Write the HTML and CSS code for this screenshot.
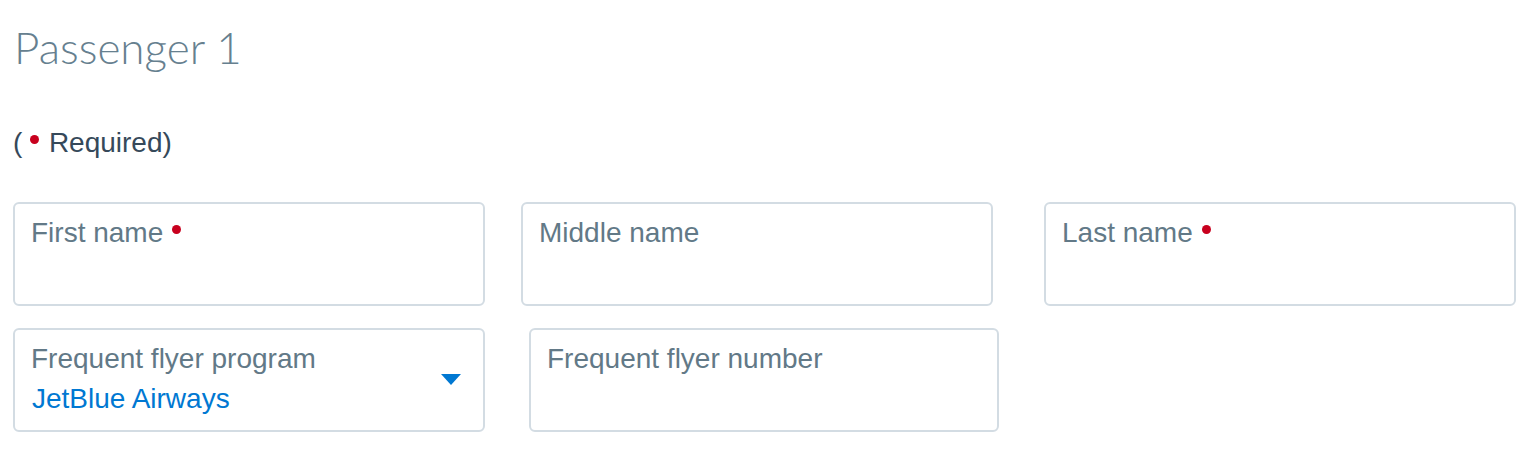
FILE: index.html
```html
<!DOCTYPE html>
<html lang="en">
<head>
    <meta charset="UTF-8">
    <meta name="viewport" content="width=device-width, initial-scale=1.0">
    <title>Passenger 1</title>
    <link rel="stylesheet" href="styles.css">
</head>
<body>
    <div class="passenger">
        <h1>Passenger 1</h1>
        <p class="required-note">( <span class="req-dot"></span> Required)</p>

        <div class="field-row">
            <div class="field">
                <div class="field-text">
                    <span class="label">First name <span class="req-dot"></span></span>
                </div>
            </div>
            <div class="field">
                <div class="field-text">
                    <span class="label">Middle name</span>
                </div>
            </div>
            <div class="field field-last">
                <div class="field-text">
                    <span class="label">Last name <span class="req-dot"></span></span>
                </div>
            </div>
        </div>

        <div class="field-row second">
            <div class="field field-select">
                <div class="field-text">
                    <span class="label">Frequent flyer program</span>
                    <span class="value">JetBlue Airways</span>
                </div>
                <span class="arrow"></span>
            </div>
            <div class="field field-number">
                <div class="field-text">
                    <span class="label">Frequent flyer number</span>
                </div>
            </div>
        </div>
    </div>
</body>
</html>
```

FILE: styles.css
```css
body {
    margin: 0;
    padding: 21px 13px 0 13px;
    background-color: #ffffff;
    font-family: "Liberation Sans", Arial, sans-serif;
}
h1 {
    margin: 0 0 0 1px;
    font-family: Lato, "Open Sans", sans-serif;
    font-weight: 300;
    font-size: 44px;
    line-height: 1.2;
    color: #66808f;
}
.required-note {
    margin: 53px 0 0 0;
    font-size: 28px;
    line-height: 32px;
    color: #36495a;
}
.req-dot {
    display: inline-block;
    width: 9px;
    height: 9px;
    border-radius: 50%;
    background-color: #c8001e;
    vertical-align: 8px;
    margin-right: 2px;
}
.field-row {
    display: flex;
    gap: 36px;
    margin-top: 43px;
}
.field-row.second {
    gap: 44px;
    margin-top: 22px;
}
.field {
    box-sizing: border-box;
    width: 472px;
    height: 104px;
    border: 2px solid #d3dce3;
    border-radius: 6px;
    padding: 13px 16px 0 16px;
    display: flex;
}
.field-last {
    margin-left: 15px;
}
.field-number {
    width: 470px;
}
.field-text {
    display: flex;
    flex-direction: column;
    flex: 1;
}
.label {
    font-size: 28px;
    line-height: 32px;
    color: #627987;
}
.label .req-dot {
    margin-left: 1px;
}
.value {
    margin-top: 8px;
    font-size: 28px;
    line-height: 32px;
    color: #0078d2;
    padding-left: 1px;
}
.field-select {
    align-items: center;
    padding-top: 0;
}
.field-select .field-text {
    padding-top: 13px;
    align-self: flex-start;
}
.arrow {
    width: 0;
    height: 0;
    border-left: 10px solid transparent;
    border-right: 10px solid transparent;
    border-top: 11px solid #0078d2;
    margin-right: 6px;
}
```
